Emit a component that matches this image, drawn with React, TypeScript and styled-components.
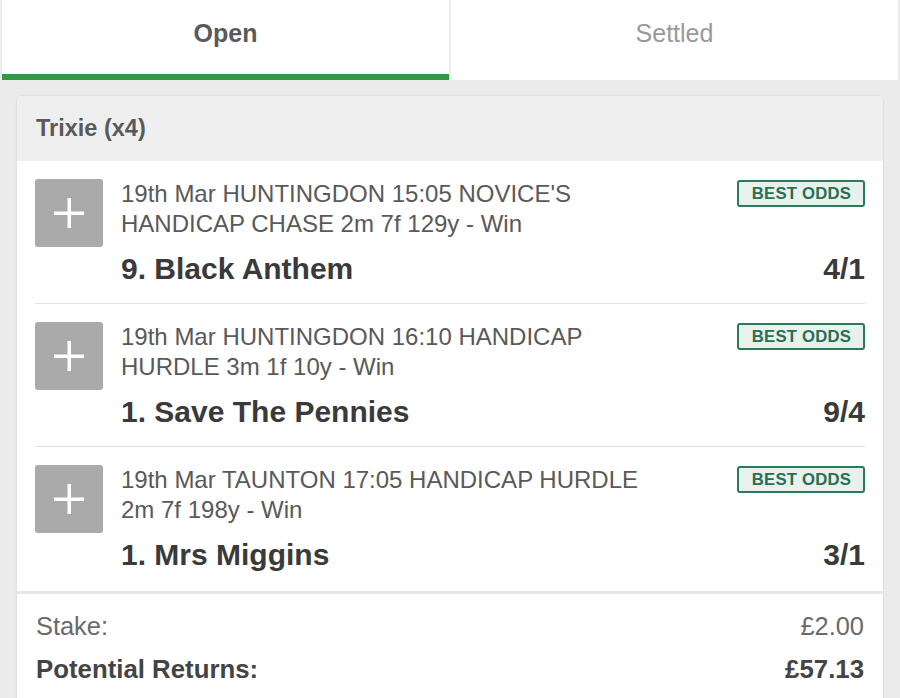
import React from "react";
import styled, { createGlobalStyle } from "styled-components";

const Global = createGlobalStyle`
  html, body { margin: 0; padding: 0; background: #ebebeb; }
  body { font-family: "Liberation Sans", Arial, Helvetica, sans-serif; -webkit-font-smoothing: antialiased; }
  * { box-sizing: border-box; }
`;

const Page = styled.div`
  width: 900px;
  height: 698px;
  overflow: hidden;
  background: #ebebeb;
`;

const Tabs = styled.div`
  display: flex;
  gap: 2px;
  padding: 0 2px;
  height: 80px;
`;

const Tab = styled.div<{ $active?: boolean }>`
  flex: 1;
  background: #fff;
  display: flex;
  align-items: center;
  justify-content: center;
  padding-bottom: 8px;
  font-size: 25px;
  font-weight: ${(p) => (p.$active ? 700 : 400)};
  color: ${(p) => (p.$active ? "#5a5a5a" : "#999")};
  border-bottom: 6px solid ${(p) => (p.$active ? "#2e9a45" : "#fff")};
`;

const Card = styled.div`
  margin: 16px 17px 0;
  background: #fff;
  border-radius: 4px;
  box-shadow: 0 0 2px rgba(0, 0, 0, 0.15);
  overflow: hidden;
`;

const CardHeader = styled.div`
  height: 65px;
  background: #efefef;
  display: flex;
  align-items: center;
  padding: 0 19px 1px;
  font-size: 23.5px;
  font-weight: 700;
  color: #5a5a5a;
`;

const Selection = styled.div<{ $last?: boolean }>`
  margin: 0 18px;
  display: flex;
  align-items: flex-start;
  gap: 18px;
  padding: 18px 0 ${(p) => (p.$last ? "19px" : "17px")};
  border-bottom: ${(p) => (p.$last ? "none" : "1px solid #e2e2e2")};
`;

const PlusBox = styled.div`
  flex: 0 0 68px;
  height: 68px;
  background: #aaaaaa;
  border-radius: 3px;
  display: flex;
  align-items: center;
  justify-content: center;
`;

const Body = styled.div`
  flex: 1;
  min-width: 0;
`;

const TopLine = styled.div`
  display: flex;
  justify-content: space-between;
  align-items: flex-start;
  gap: 20px;
`;

const RaceInfo = styled.div`
  font-size: 24px;
  line-height: 30px;
  color: #595959;
  max-width: 530px;
`;

const Badge = styled.div`
  flex: none;
  margin-top: 1px;
  height: 27px;
  padding: 0 12px 0 13px;
  border: 2px solid #2a7a5c;
  border-radius: 3px;
  background: #e9f1ed;
  color: #2a6e54;
  font-size: 16.7px;
  font-weight: 700;
  letter-spacing: 0.2px;
  display: flex;
  align-items: center;
`;

const NameLine = styled.div`
  margin-top: 13px;
  display: flex;
  justify-content: space-between;
  align-items: center;
  line-height: 34px;
  font-size: 30px;
  font-weight: 700;
  color: #3a3a3a;
`;

const Footer = styled.div`
  border-top: 3px solid #e6e6e6;
  padding: 17px 19px 40px 19px;
  display: flex;
  flex-direction: column;
  gap: 13px;
`;

const SumRow = styled.div<{ $strong?: boolean }>`
  display: flex;
  justify-content: space-between;
  font-size: ${(p) => (p.$strong ? "25.8px" : "25.4px")};
  line-height: 30px;
  font-weight: ${(p) => (p.$strong ? 700 : 400)};
  color: ${(p) => (p.$strong ? "#444" : "#6a6a6a")};
`;

const PlusIcon = () => (
  <svg width="30" height="30" viewBox="0 0 30 30">
    <rect x="13.5" y="0" width="3.5" height="30" fill="#fff" />
    <rect x="0" y="13.5" width="30" height="3.5" fill="#fff" />
  </svg>
);

const legs = [
  { info: "19th Mar HUNTINGDON 15:05 NOVICE'S HANDICAP CHASE 2m 7f 129y - Win", name: "9. Black Anthem", odds: "4/1" },
  { info: "19th Mar HUNTINGDON 16:10 HANDICAP HURDLE 3m 1f 10y - Win", name: "1. Save The Pennies", odds: "9/4" },
  { info: "19th Mar TAUNTON 17:05 HANDICAP HURDLE 2m 7f 198y - Win", name: "1. Mrs Miggins", odds: "3/1" },
];

export default function App() {
  return (
    <Page>
      <Global />
      <Tabs>
        <Tab $active>Open</Tab>
        <Tab>Settled</Tab>
      </Tabs>
      <Card>
        <CardHeader>Trixie (x4)</CardHeader>
        {legs.map((l, i) => (
          <Selection key={l.name} $last={i === legs.length - 1}>
            <PlusBox>
              <PlusIcon />
            </PlusBox>
            <Body>
              <TopLine>
                <RaceInfo>{l.info}</RaceInfo>
                <Badge>BEST ODDS</Badge>
              </TopLine>
              <NameLine>
                <span>{l.name}</span>
                <span>{l.odds}</span>
              </NameLine>
            </Body>
          </Selection>
        ))}
        <Footer>
          <SumRow>
            <span>Stake:</span>
            <span>£2.00</span>
          </SumRow>
          <SumRow $strong>
            <span>Potential Returns:</span>
            <span>£57.13</span>
          </SumRow>
        </Footer>
      </Card>
    </Page>
  );
}
